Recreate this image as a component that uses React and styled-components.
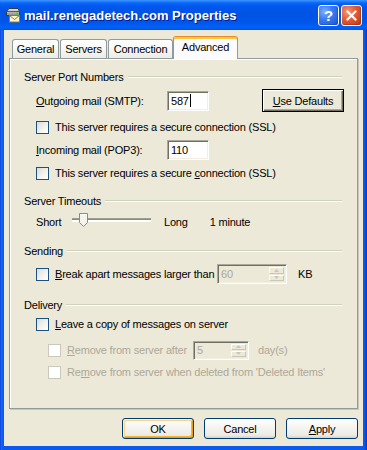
import React from 'react';
import styled, { createGlobalStyle } from 'styled-components';

const GlobalStyle = createGlobalStyle`
  html, body { margin: 0; padding: 0; }
  body {
    background: #ffffff;
    font-family: "Liberation Sans", Tahoma, Arial, sans-serif;
    font-size: 11px;
    letter-spacing: -0.2px;
    color: #000;
  }
`;

const Window = styled.div`
  width: 367px;
  height: 450px;
  box-sizing: border-box;
  display: flex;
  flex-direction: column;
  background: linear-gradient(90deg, #0831D9 0px, #166AEE 1px, #0A5AF0 3px, #0A5AF0 calc(100% - 3px), #0846D8 calc(100% - 1px), #0831B9 100%);
  overflow: hidden;
`;

const TitleBar = styled.div`
  height: 30px;
  flex: none;
  display: flex;
  align-items: center;
  padding: 0 5px 0 5px;
  box-sizing: border-box;
  background: linear-gradient(180deg, #3D95FF 0px, #0A66F8 3px, #0058EE 6px, #0054E3 14px, #0055EB 22px, #0062F7 27px, #0053E6 30px);
`;

const IconWrap = styled.div`
  width: 16px;
  height: 16px;
  flex: none;
  display: flex;
`;

const TitleText = styled.span`
  flex: 1;
  margin-left: 3px;
  color: #ffffff;
  font-family: "Liberation Sans", Arial, sans-serif;
  font-weight: bold;
  font-size: 13px;
  letter-spacing: 0;
  text-shadow: 1px 1px 0 #0A1883;
  white-space: nowrap;
`;

const CaptionButton = styled.div`
  width: 21px;
  height: 21px;
  box-sizing: border-box;
  border: 1px solid #ffffff;
  border-radius: 3px;
  margin-left: ${p => p.$ml || 0}px;
  display: flex;
  align-items: center;
  justify-content: center;
  color: #fff;
  font-family: "Liberation Sans", Arial, sans-serif;
  font-weight: bold;
  font-size: 15px;
  letter-spacing: 0;
  background: ${p => p.$variant === 'close'
    ? 'radial-gradient(circle at 30% 30%, #F09A7C 0%, #E2603A 40%, #C8431A 80%, #B53812 100%)'
    : 'radial-gradient(circle at 30% 30%, #7FB0FF 0%, #3C7DF2 40%, #2560E0 80%, #1A4FC8 100%)'};
  box-shadow: inset -1px -1px 0 rgba(0,0,0,0.15);
`;

const Client = styled.div`
  flex: 1;
  margin: 0 4px 4px 4px;
  background: #ECE9D8;
  display: flex;
  flex-direction: column;
`;

const TabStrip = styled.div`
  display: flex;
  align-items: flex-end;
  height: 22px;
  margin-top: 6px;
  padding-left: 8px;
  position: relative;
  z-index: 1;
`;

const Tab = styled.div`
  width: ${p => p.$w}px;
  height: ${p => (p.$active ? 23 : 19)}px;
  margin-left: ${p => p.$ml || 0}px;
  margin-bottom: ${p => (p.$active ? -1 : 0)}px;
  box-sizing: border-box;
  border: 1px solid #919B9C;
  border-bottom: none;
  border-top-color: ${p => (p.$active ? '#E68B2C' : '#919B9C')};
  border-radius: 3px 3px 0 0;
  background: ${p => (p.$active
    ? '#FCFCFE'
    : 'linear-gradient(180deg, #FFFFFF 0%, #F7F7F4 50%, #ECEBE6 100%)')};
  box-shadow: ${p => (p.$active ? 'inset 0 2px 0 #FFC83C' : 'none')};
  display: flex;
  align-items: center;
  justify-content: center;
  padding-bottom: ${p => (p.$active ? 3 : 0)}px;
  white-space: nowrap;
`;

const Panel = styled.div`
  margin: 0 5px 0 5px;
  height: 351px;
  box-sizing: border-box;
  border: 1px solid #919B9C;
  box-shadow: inset 1px 1px 0 #ffffff, 1px 1px 0 #C9C7BA;
  background: #ECE9D8;
  padding: 0 15px 0 14px;
  display: flex;
  flex-direction: column;
`;

const GroupHeader = styled.div`
  display: flex;
  align-items: center;
  height: 16px;
  margin-top: ${p => p.$mt}px;
  white-space: nowrap;
  &::after {
    content: '';
    flex: 1;
    margin-left: 4px;
    border-top: 1px solid #D0D0BF;
    border-bottom: 1px solid #ffffff;
  }
`;

const Row = styled.div`
  display: flex;
  align-items: center;
  height: ${p => p.$h}px;
  margin-top: ${p => p.$mt}px;
  padding-left: ${p => p.$indent}px;
  white-space: nowrap;
  color: ${p => (p.$disabled ? '#ACA899' : '#000')};
`;

const Label = styled.span`
  width: ${p => (p.$w ? `${p.$w}px` : 'auto')};
  flex: none;
  margin-left: ${p => p.$ml || 0}px;
`;

const CheckBox = styled.span`
  width: 13px;
  height: 13px;
  flex: none;
  box-sizing: border-box;
  margin-right: 6px;
  border: 1px solid ${p => (p.$disabled ? '#CAC8BB' : '#1C5180')};
  background: ${p => (p.$disabled
    ? '#FFFFFF'
    : 'linear-gradient(135deg, #DCDCD7 0%, #F4F4F0 60%, #FFFFFF 100%)')};
`;

const TextBox = styled.div`
  width: ${p => p.$w}px;
  height: ${p => p.$h}px;
  flex: none;
  box-sizing: border-box;
  margin-left: ${p => p.$ml || 0}px;
  border-style: solid;
  border-width: 1px;
  border-color: #ACA899 #FFFFFF #FFFFFF #ACA899;
  box-shadow: inset 1px 1px 0 #716F64, inset -1px -1px 0 #F1EFE2;
  background: ${p => (p.$disabled ? '#ECE9D8' : '#FFFFFF')};
  color: ${p => (p.$disabled ? '#ACA899' : '#000')};
  display: flex;
  align-items: center;
  padding: 2px 2px 2px 3px;
`;

const Value = styled.span`
  flex: 1;
  display: flex;
  align-items: center;
`;

const Caret = styled.span`
  width: 1px;
  height: 13px;
  background: #000;
  margin-left: 1px;
`;

const Spinner = styled.div`
  width: 15px;
  align-self: stretch;
  display: flex;
  flex-direction: column;
  gap: 1px;
`;

const SpinPart = styled.div`
  flex: 1;
  box-sizing: border-box;
  border: 1px solid #E4E2D6;
  border-color: #FFFFFF #C9C7BA #C9C7BA #FFFFFF;
  background: #ECE9D8;
  display: flex;
  align-items: center;
  justify-content: center;
`;

const ClassicButton = styled.div`
  width: 82px;
  height: 23px;
  flex: none;
  box-sizing: border-box;
  margin-left: ${p => p.$ml}px;
  border: 1px solid #000;
  box-shadow: inset 1px 1px 0 #FFFFFF, inset -1px -1px 0 #716F64, inset -2px -2px 0 #ACA899;
  background: #ECE9D8;
  display: flex;
  align-items: center;
  justify-content: center;
`;

const SliderTrack = styled.div`
  width: 79px;
  height: 16px;
  flex: none;
  position: relative;
  margin-left: ${p => p.$ml}px;
  &::before {
    content: '';
    position: absolute;
    left: 0;
    right: 0;
    top: 4px;
    height: 1px;
    background: #9D9D92;
    border-bottom: 1px solid #8A8A80;
    box-shadow: 0 2px 0 #FFFFFF;
  }
`;

const Thumb = styled.svg`
  position: absolute;
  left: 7px;
  top: -1px;
`;

const ButtonBar = styled.div`
  display: flex;
  justify-content: flex-end;
  gap: 10px;
  margin-top: 9px;
  padding-right: 5px;
`;

const PushButton = styled.div`
  width: 72px;
  height: 21px;
  box-sizing: border-box;
  border: 1px solid #003C74;
  border-radius: 3px;
  background: linear-gradient(180deg, #FFFFFF 0%, #F6F5F1 40%, #ECEBE6 85%, #D6D0C5 100%);
  box-shadow: ${p => (p.$focused
    ? 'inset 1px 1px 0 #FFF0CF, inset -1px -1px 0 #E5A01A, inset 2px 2px 0 #FCD58A, inset -2px -2px 0 #F8B330'
    : 'none')};
  display: flex;
  align-items: center;
  justify-content: center;
`;

function AppIcon() {
  return (
    <IconWrap>
      <svg width="16" height="16" viewBox="0 0 16 16">
        <defs>
          <linearGradient id="srv" x1="0" y1="0" x2="0" y2="1">
            <stop offset="0" stopColor="#E8E8E8" />
            <stop offset="1" stopColor="#8A8A8A" />
          </linearGradient>
        </defs>
        <path d="M1.5 4.5 L4 1.5 H13 L14.5 4.5 V8.5 H1.5 Z" fill="url(#srv)" stroke="#3C3C3C" />
        <line x1="2" y1="4.5" x2="14" y2="4.5" stroke="#5A5A5A" />
        <rect x="11" y="5.5" width="2" height="2" fill="#2EDB2E" />
        <rect x="4.5" y="8.5" width="10" height="6.5" fill="#FFF7C6" stroke="#8C7A3C" />
        <path d="M4.5 8.5 L9.5 12.5 L14.5 8.5" fill="none" stroke="#8C7A3C" />
      </svg>
    </IconWrap>
  );
}

function CloseGlyph() {
  return (
    <svg width="13" height="13" viewBox="0 0 13 13">
      <path d="M2.5 2.5 L10.5 10.5 M10.5 2.5 L2.5 10.5" stroke="#fff" strokeWidth="2.2" strokeLinecap="square" />
    </svg>
  );
}

function Arrow({ up }) {
  return (
    <svg width="5" height="3" viewBox="0 0 5 3">
      <path d={up ? 'M0 3 L2.5 0 L5 3 Z' : 'M0 0 L2.5 3 L5 0 Z'} fill="#C9C7BA" />
    </svg>
  );
}

function SpinBox({ w, h, value, ml }) {
  return (
    <TextBox $w={w} $h={h} $ml={ml} $disabled>
      <Value>{value}</Value>
      <Spinner>
        <SpinPart><Arrow up /></SpinPart>
        <SpinPart><Arrow /></SpinPart>
      </Spinner>
    </TextBox>
  );
}

export default function App() {
  return (
    <>
      <GlobalStyle />
      <Window>
        <TitleBar>
          <AppIcon />
          <TitleText>mail.renegadetech.com Properties</TitleText>
          <CaptionButton $variant="help">?</CaptionButton>
          <CaptionButton $variant="close" $ml={2}><CloseGlyph /></CaptionButton>
        </TitleBar>
        <Client>
          <TabStrip>
            <Tab $w={47}>General</Tab>
            <Tab $w={47} $ml={1}>Servers</Tab>
            <Tab $w={65} $ml={1}>Connection</Tab>
            <Tab $w={65} $active>Advanced</Tab>
          </TabStrip>
          <Panel>
            <GroupHeader $mt={10}>Server Port Numbers</GroupHeader>
            <Row $h={23} $mt={4} $indent={12}>
              <Label $w={131}><u>O</u>utgoing mail (SMTP):</Label>
              <TextBox $w={42} $h={20}>
                <Value>587<Caret /></Value>
              </TextBox>
              <ClassicButton $ml={53}><span><u>U</u>se Defaults</span></ClassicButton>
            </Row>
            <Row $h={16} $mt={7} $indent={12}>
              <CheckBox />
              <Label>This server requires a secure connection (SSL)</Label>
            </Row>
            <Row $h={20} $mt={5} $indent={12}>
              <Label $w={131}><u>I</u>ncoming mail (POP3):</Label>
              <TextBox $w={42} $h={20}>
                <Value>110</Value>
              </TextBox>
            </Row>
            <Row $h={16} $mt={5} $indent={12}>
              <CheckBox />
              <Label>This server requires a secure <u>c</u>onnection (SSL)</Label>
            </Row>

            <GroupHeader $mt={12}>Server Timeouts</GroupHeader>
            <Row $h={16} $mt={5} $indent={12}>
              <Label $w={24}>Short</Label>
              <SliderTrack $ml={12}>
                <Thumb width="9" height="14" viewBox="0 0 9 14">
                  <path d="M0.5 0.5 H8.5 V9.5 L4.5 13.5 L0.5 9.5 Z" fill="#F4F3EE" stroke="#8D8A7C" />
                  <path d="M1.5 1.5 H7.5" stroke="#FFFFFF" />
                </Thumb>
              </SliderTrack>
              <Label $ml={13}>Long</Label>
              <Label $ml={22}>1 minute</Label>
            </Row>

            <GroupHeader $mt={13}>Sending</GroupHeader>
            <Row $h={20} $mt={5} $indent={12}>
              <CheckBox />
              <Label $w={162}><u>B</u>reak apart messages larger than</Label>
              <SpinBox w={70} h={20} value="60" />
              <Label $ml={11}>KB</Label>
            </Row>

            <GroupHeader $mt={13}>Delivery</GroupHeader>
            <Row $h={16} $mt={3} $indent={12}>
              <CheckBox />
              <Label><u>L</u>eave a copy of messages on server</Label>
            </Row>
            <Row $h={20} $mt={8} $indent={24} $disabled>
              <CheckBox $disabled />
              <Label $w={126}><u>R</u>emove from server after</Label>
              <SpinBox w={56} h={19} value="5" />
              <Label $ml={9}>day(s)</Label>
            </Row>
            <Row $h={16} $mt={4} $indent={24} $disabled>
              <CheckBox $disabled />
              <Label>Re<u>m</u>ove from server when deleted from 'Deleted Items'</Label>
            </Row>
          </Panel>
          <ButtonBar>
            <PushButton $focused>OK</PushButton>
            <PushButton>Cancel</PushButton>
            <PushButton><span><u>A</u>pply</span></PushButton>
          </ButtonBar>
        </Client>
      </Window>
    </>
  );
}
